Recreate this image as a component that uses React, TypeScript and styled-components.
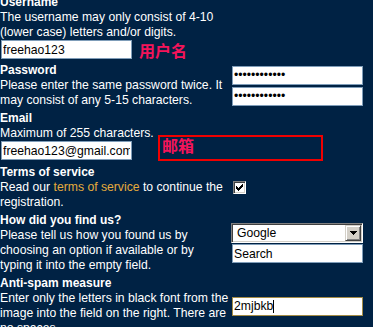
import React from "react";
import styled, { createGlobalStyle } from "styled-components";

const Global = createGlobalStyle`
  html, body {
    margin: 0;
    padding: 0;
    overflow: hidden;
    background: #002244;
  }
  body {
    font-family: "Liberation Sans", Arial, sans-serif;
  }
`;

const Form = styled.form`
  margin: -4.66px 0 0 0;
  display: flex;
  flex-direction: column;
  gap: 3px;
  color: #ffffff;
  font-family: "Liberation Sans", Arial, sans-serif;
  font-size: 12.2px;
  line-height: 15px;
`;

const Section = styled.div`
  display: grid;
  grid-template-columns: 228px 132px;
  column-gap: 3px;
  align-items: center;
`;

const Info = styled.div<{ $wide?: boolean }>`
  display: flex;
  flex-direction: column;
  grid-column: ${(p) => (p.$wide ? "1 / -1" : "auto")};
`;

const Title = styled.div`
  font-weight: bold;
  font-size: 12px;
  white-space: nowrap;
`;

const Desc = styled.p`
  margin: 0;
  white-space: nowrap;
`;

const Link = styled.a`
  color: #e5ab3c;
  text-decoration: none;
`;

const Controls = styled.div<{ $gap?: number }>`
  display: flex;
  flex-direction: column;
  align-items: flex-start;
  gap: ${(p) => p.$gap ?? 2}px;
`;

const FieldRow = styled.div<{ $after?: number; $align?: string }>`
  display: flex;
  align-items: ${(p) => p.$align ?? "center"};
  margin-bottom: ${(p) => p.$after ?? 1}px;
`;

const TextInput = styled.input<{ $focus?: boolean }>`
  box-sizing: border-box;
  flex-shrink: 0;
  width: 131px;
  height: 19px;
  margin: 0 1px;
  padding: 0 1px;
  border: 1px solid ${(p) => (p.$focus ? "#a38b45" : "#7f9db9")};
  background: #ffffff;
  color: #000000;
  font-family: "Liberation Sans", Arial, sans-serif;
  font-size: 12.2px;
  outline: none;
  caret-color: #000;
`;

const CaretField = styled.div`
  position: relative;
  display: inline-flex;
`;

const Caret = styled.span`
  position: absolute;
  left: 42px;
  top: 3px;
  width: 1px;
  height: 13px;
  background: #000000;
  pointer-events: none;
`;

const Note = styled.span`
  font-family: "Noto Sans CJK SC", "Noto Sans CJK JP", sans-serif;
  font-weight: bold;
  font-size: 16px;
  line-height: 16px;
  color: #f5145a;
  white-space: nowrap;
`;

const NoteLabel = styled(Note)`
  margin-left: 6px;
`;

const Annotation = styled.div`
  box-sizing: border-box;
  flex-shrink: 0;
  width: 165px;
  height: 26px;
  margin: -6px 0 -1px 25px;
  border: 2px solid #f00000;
  padding: 0 2px;
  display: flex;
  align-items: flex-start;
`;

const CheckBox = styled.span`
  box-sizing: border-box;
  width: 13px;
  height: 13px;
  margin-left: 2px;
  display: inline-flex;
  align-items: center;
  justify-content: center;
  background: #ffffff;
  border: 1px solid;
  border-color: #808080 #ffffff #ffffff #808080;
  box-shadow: inset 1px 1px 0 #404040, inset -1px -1px 0 #d4d0c8;
`;

const SelectBox = styled.div`
  box-sizing: border-box;
  width: 132px;
  height: 20px;
  display: flex;
  align-items: stretch;
  border: 1px solid;
  border-color: #808080 #ffffff #ffffff #808080;
  box-shadow: inset 1px 1px 0 #404040, inset -1px -1px 0 #d4d0c8;
  padding: 1px;
  background: #ffffff;
`;

const NativeSelect = styled.select`
  appearance: none;
  -webkit-appearance: none;
  flex: 1;
  min-width: 0;
  border: 0;
  background: transparent;
  padding: 0 0 0 4px;
  margin: 0;
  font-family: "Liberation Sans", Arial, sans-serif;
  font-size: 12.2px;
  color: #000000;
  outline: none;
`;

const ArrowButton = styled.span`
  box-sizing: border-box;
  width: 16px;
  display: flex;
  align-items: center;
  justify-content: center;
  background: #d4d0c8;
  border: 1px solid;
  border-color: #d4d0c8 #404040 #404040 #d4d0c8;
  box-shadow: inset 1px 1px 0 #ffffff, inset -1px -1px 0 #808080;
`;

export default function App() {
  return (
    <>
      <Global />
      <Form onSubmit={(e) => e.preventDefault()}>
        <Section>
          <Info $wide>
            <Title>Username</Title>
            <Desc>
              The username may only consist of 4-10
              <br />
              (lower case) letters and/or digits.
            </Desc>
            <FieldRow>
              <TextInput type="text" defaultValue="freehao123" />
              <NoteLabel>用户名</NoteLabel>
            </FieldRow>
          </Info>
        </Section>

        <Section>
          <Info>
            <Title>Password</Title>
            <Desc>
              Please enter the same password twice. It
              <br />
              may consist of any 5-15 characters.
            </Desc>
          </Info>
          <Controls $gap={2}>
            <TextInput type="password" defaultValue="freehao12345" />
            <TextInput type="password" defaultValue="freehao12345" />
          </Controls>
        </Section>

        <Section>
          <Info $wide>
            <Title>Email</Title>
            <Desc>Maximum of 255 characters.</Desc>
            <FieldRow $align="flex-end" $after={2}>
              <TextInput type="text" defaultValue="freehao123@gmail.com" />
              <Annotation>
                <Note>邮箱</Note>
              </Annotation>
            </FieldRow>
          </Info>
        </Section>

        <Section>
          <Info>
            <Title>Terms of service</Title>
            <Desc>
              Read our <Link href="#">terms of service</Link> to continue the
              <br />
              registration.
            </Desc>
          </Info>
          <Controls>
            <CheckBox role="checkbox" aria-checked="true">
              <svg width="7" height="7" viewBox="0 0 7 7" shapeRendering="crispEdges">
                <path d="M6 0h1v3h-1v1h-1v1h-1v1h-1v1h-1v-1h-1v-1h-1v-3h1v1h1v1h1v-1h1v-1h1z" fill="#000" />
              </svg>
            </CheckBox>
          </Controls>
        </Section>

        <Section>
          <Info>
            <Title>How did you find us?</Title>
            <Desc>
              Please tell us how you found us by
              <br />
              choosing an option if available or by
              <br />
              typing it into the empty field.
            </Desc>
          </Info>
          <Controls $gap={1}>
            <SelectBox>
              <NativeSelect defaultValue="Google">
                <option>Google</option>
                <option>Yahoo</option>
                <option>Friend</option>
                <option>Other</option>
              </NativeSelect>
              <ArrowButton>
                <svg width="7" height="4" viewBox="0 0 7 4" shapeRendering="crispEdges">
                  <path d="M0 0h7v1h-1v1h-1v1h-1v1h-1v-1h-1v-1h-1v-1h-1z" fill="#000" />
                </svg>
              </ArrowButton>
            </SelectBox>
            <TextInput type="text" defaultValue="Search" />
          </Controls>
        </Section>

        <Section>
          <Info>
            <Title>Anti-spam measure</Title>
            <Desc>
              Enter only the letters in black font from the
              <br />
              image into the field on the right. There are
              <br />
              no spaces.
            </Desc>
          </Info>
          <Controls>
            <CaretField>
              <TextInput type="text" defaultValue="2mjbkb" $focus />
              <Caret />
            </CaretField>
          </Controls>
        </Section>
      </Form>
    </>
  );
}
